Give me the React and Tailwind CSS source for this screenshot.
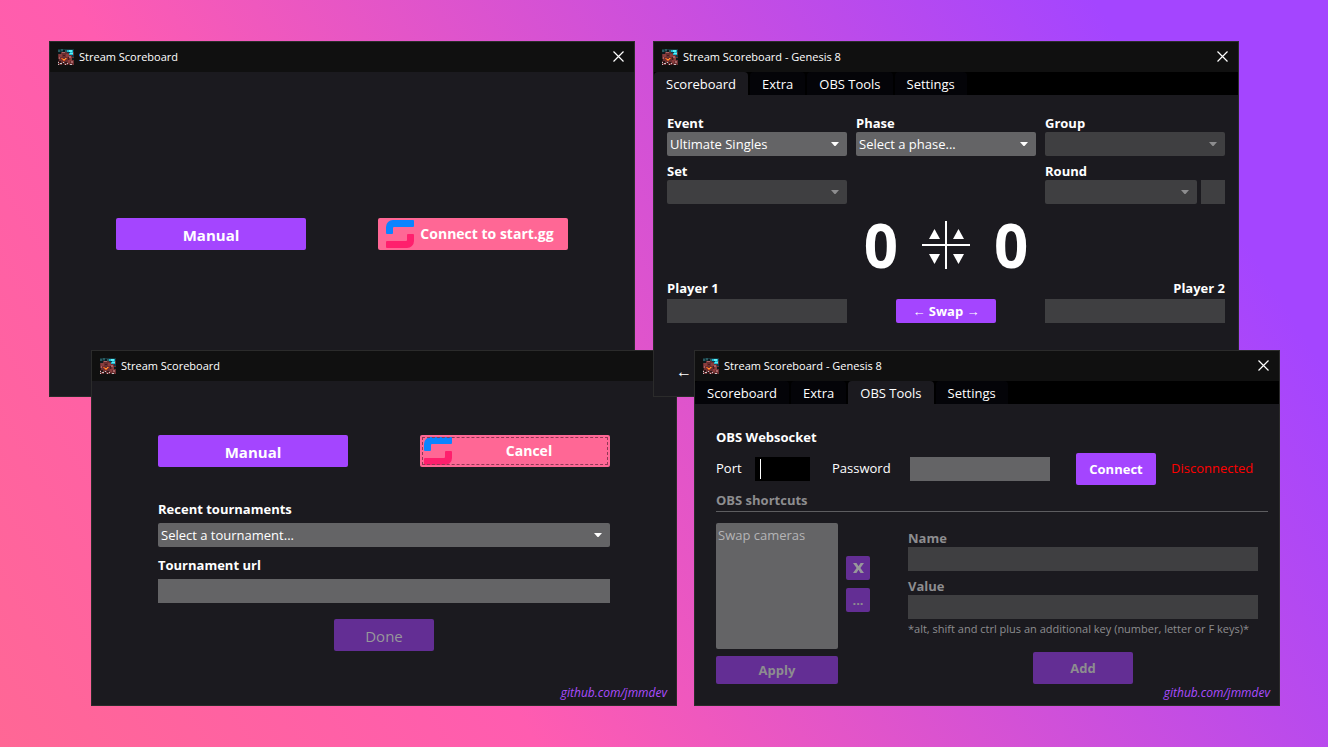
import React, { useId } from "react";

const BODY = "font-['Open_Sans','Noto_Sans',sans-serif]";

function AppIcon() {
  return (
    <svg className="size-4 shrink-0" viewBox="0 0 16 16" shapeRendering="crispEdges" aria-hidden="true">
      <rect width="16" height="16" fill="#6b2f31" />
      <path fill="#16353b" d="M0 0h16v3H0z" />
      <path fill="#2a5b60" d="M0 1h2v2H0zM3 0h2v2H3zM7 1h2v2H7z" />
      <path fill="#0b1a1e" d="M5 1h2v3H5zM0 3h3v2H0zM14 9h2v2h-2z" />
      <path fill="#20b4cf" d="M9 1h6v2H9zM11 3h4v3h-4z" />
      <path fill="#5ff0f7" d="M11 1h3v2h-3zM12 4h3v1h-3z" />
      <path fill="#0e3c4a" d="M9 3h3v1H9zM14 6h2v2h-2z" />
      <path fill="#8a3d3d" d="M1 5h3v3H1zM8 5h3v3H8zM12 8h2v4h-2zM10 11h2v3h-2z" />
      <path fill="#a86466" d="M4 3h3v1H4zM11 7h2v2h-2zM13 12h2v2h-2zM1 8h1v2H1z" />
      <path fill="#4a1a1c" d="M5 6h2v1H5zM10 8h1v3h-1z" />
      <path fill="#d9561d" d="M3 9h2v1H3zM8 9h1v1H8zM4 10h4v1H4zM5 11h2v1H5z" />
      <path fill="#ff9a35" d="M5 10h2v1H5zM7 9h1v1H7z" />
      <path fill="#241416" d="M0 10h1v2H0zM1 12h2v2H1zM4 14h2v2H4zM7 13h2v1H7zM10 15h1v1h-1z" />
      <path fill="#c9c4c6" d="M0 13h1v1H0zM2 14h2v1H2zM5 13h1v1H5zM7 15h1v1H7zM9 14h1v1H9zM12 15h2v1h-2zM0 15h1v1H0z" />
    </svg>
  );
}

function StartLogo() {
  return (
    <svg className="size-7 shrink-0" viewBox="0 0 28 28" aria-hidden="true">
      <path fill="#0b84ff" d="M0 13V7a7 7 0 0 1 7-7h20a1 1 0 0 1 1 1v5a1 1 0 0 1-1 1H8a1 1 0 0 0-1 1v5a1 1 0 0 1-1 1H1a1 1 0 0 1-1-1z" />
      <path fill="#ff1f6d" d="M28 15v6a7 7 0 0 1-7 7H1a1 1 0 0 1-1-1v-5a1 1 0 0 1 1-1h19a1 1 0 0 0 1-1v-5a1 1 0 0 1 1-1h5a1 1 0 0 1 1 1z" />
    </svg>
  );
}

function Window({ title, place, tabs, active, link, children }) {
  return (
    <section className={`absolute flex min-h-[356px] w-[586px] flex-col border border-[#2b2b2b] bg-[#1b1a1f] ${place}`}>
      <header className="flex h-[30px] items-center gap-[5px] bg-[#101010] pr-[10px] pl-2">
        <AppIcon />
        <h2 className="flex-1 text-[11px] leading-4">{title}</h2>
        <button type="button" aria-label="Close" className="pb-[2px]">
          <svg className="size-[11px]" viewBox="0 0 11 11" aria-hidden="true">
            <path d="M.5.5l10 10M10.500.5l-10 10" stroke="#fff" strokeWidth="1.2" />
          </svg>
        </button>
      </header>
      {tabs && (
        <nav className="flex h-[23px] gap-[2px] bg-black">
          {["Scoreboard", "Extra", "OBS Tools", "Settings"].map((t) => (
            <button
              key={t}
              type="button"
              className={`rounded-t px-3 pt-[2px] ${t === active ? "bg-[#1b1a1f]" : "bg-[#040408]"}`}
            >
              {t}
            </button>
          ))}
        </nav>
      )}
      {children}
      {link && (
        <footer className="mt-auto flex justify-end pr-[9px] pb-1">
          <a href="https://github.com/jmmdev" className="text-[12px] leading-4 text-[#ac4dff] italic">
            github.com/jmmdev
          </a>
        </footer>
      )}
    </section>
  );
}

function Select({ id, label, value = "", disabled, className = "" }) {
  return (
    <div className={`relative ${className}`}>
      <select
        id={id}
        aria-label={label}
        disabled={disabled}
        className={`block h-6 w-full appearance-none rounded-[2px] pt-[2px] pr-6 pl-[3px] ${disabled ? "bg-[#3f3f41]" : "bg-[#646466]"}`}
      >
        <option>{value}</option>
      </select>
      <svg className="pointer-events-none absolute top-[10px] right-2 h-1 w-2" viewBox="0 0 8 4" aria-hidden="true">
        <path d="M0 0h8L4.500 4h-1z" fill={disabled ? "#8d8d8f" : "#fff"} />
      </svg>
    </div>
  );
}

function Field({ label, children }) {
  const id = useId();
  return (
    <div>
      <label htmlFor={id} className="block leading-[18px] font-bold">{label}</label>
      {children(id)}
    </div>
  );
}

function Button({ className = "", children, ...rest }) {
  return (
    <button type="button" className={`rounded-[2px] ${className}`} {...rest}>
      {children}
    </button>
  );
}

function Arrow({ down, label }) {
  return (
    <button type="button" aria-label={label} className={`flex justify-center ${down ? "items-start pt-[9px]" : "items-end pb-[6px]"}`}>
      <svg className="h-[10px] w-[11px]" viewBox="0 0 11 10" aria-hidden="true">
        <path d={down ? "M0 0h11L5.500 10z" : "M0 10h11L5.500 0z"} fill="#fff" />
      </svg>
    </button>
  );
}

function StartWindow() {
  return (
    <Window title="Stream Scoreboard" place="top-[41px] left-[49px]">
      <div className="flex justify-between px-[66px] pt-[146px] text-[15px] font-bold">
        <Button className="h-8 w-[190px] bg-[#a445ff] pt-[2px]">Manual</Button>
        <Button className="flex h-8 w-[190px] items-center bg-[#ff6795] px-2 text-[14px]">
          <StartLogo />
          <span className="flex-1 pb-[2px] whitespace-nowrap">Connect to start.gg</span>
        </Button>
      </div>
    </Window>
  );
}

function ConnectWindow() {
  return (
    <Window title="Stream Scoreboard" place="top-[350px] left-[91px]" link>
      <div className="flex flex-col px-[66px] pt-[54px]">
        <div className="flex justify-between text-[15px] font-bold">
          <Button className="h-8 w-[190px] bg-[#a445ff] pt-[2px]">Manual</Button>
          <Button className="flex h-8 w-[190px] items-center bg-[#ff6795] px-1 text-[14px] outline-1 -outline-offset-[3px] outline-[#8f3a55] outline-dashed">
            <StartLogo />
            <span className="flex-1 pb-[2px]">Cancel</span>
          </Button>
        </div>
        <label htmlFor="recent" className="mt-8 mb-1 leading-5 font-bold">Recent tournaments</label>
        <Select id="recent" value="Select a tournament..." />
        <label htmlFor="url" className="mt-2 mb-1 leading-5 font-bold">Tournament url</label>
        <input id="url" type="text" className="h-6 bg-[#646466] px-1" />
        <Button disabled className="mt-4 h-8 w-[100px] self-center bg-[#632e94] pt-[2px] text-[15px] text-[#97979b]">Done</Button>
      </div>
    </Window>
  );
}

function ScoreboardWindow() {
  return (
    <Window title="Stream Scoreboard - Genesis 8" place="top-[41px] left-[653px]" tabs active="Scoreboard">
      <div className="px-[13px] pt-[19px]">
        <div className="grid grid-cols-3 gap-x-[9px] gap-y-[6px]">
          <Field label="Event">{(id) => <Select id={id} value="Ultimate Singles" />}</Field>
          <Field label="Phase">{(id) => <Select id={id} value="Select a phase..." />}</Field>
          <Field label="Group">{(id) => <Select id={id} disabled />}</Field>
          <Field label="Set">{(id) => <Select id={id} disabled />}</Field>
          <div />
          <Field label="Round">
            {(id) => (
              <div className="flex gap-1">
                <Select id={id} disabled className="flex-1" />
                <input aria-label="Round number" disabled className="h-6 w-6 bg-[#3f3f41]" />
              </div>
            )}
          </Field>
        </div>
        <div className="mt-4 mb-[9px] flex h-[50px] items-center justify-center gap-6">
          <output className="text-[60px] leading-[50px] font-bold">0</output>
          <div className="relative grid size-12 grid-cols-2 grid-rows-2">
            <svg className="pointer-events-none absolute inset-0 size-12" viewBox="0 0 48 48" aria-hidden="true">
              <path d="M24 0v48M0 24h48" stroke="#fff" strokeWidth="2" />
            </svg>
            <Arrow label="Player 1 up" />
            <Arrow label="Player 2 up" />
            <Arrow label="Player 1 down" down />
            <Arrow label="Player 2 down" down />
          </div>
          <output className="text-[60px] leading-[50px] font-bold">0</output>
        </div>
        <div className="grid grid-cols-3 items-end gap-x-[9px]">
          <div className="flex flex-col gap-[2px]">
            <label htmlFor="p1" className="leading-[18px] font-bold">Player 1</label>
            <input id="p1" type="text" className="h-6 w-full bg-[#3f3f41] px-1" />
          </div>
          <Button className="h-6 w-[100px] justify-self-center bg-[#a445ff] pt-[2px] font-bold">← Swap →</Button>
          <div className="flex flex-col gap-[2px]">
            <label htmlFor="p2" className="text-right leading-[18px] font-bold">Player 2</label>
            <input id="p2" type="text" className="h-6 w-full bg-[#3f3f41] px-1" />
          </div>
        </div>
        <div className="mt-9 pl-[9px] text-[16px] leading-6">←</div>
      </div>
    </Window>
  );
}

function ObsWindow() {
  return (
    <Window title="Stream Scoreboard - Genesis 8" place="top-[350px] left-[694px]" tabs active="OBS Tools" link>
      <div className="pt-[23px] pr-[11px] pl-[21px]">
        <h3 className="leading-5 font-bold">OBS Websocket</h3>
        <div className="mt-[6px] flex h-8 items-center">
          <label htmlFor="port" className="w-[39px]">Port</label>
          <div className="relative mr-[22px]">
            <input id="port" type="text" className="block h-6 w-[55px] bg-black px-1" />
            <span className="pointer-events-none absolute top-[2px] left-[5px] h-5 w-px bg-white" />
          </div>
          <label htmlFor="password" className="w-[78px]">Password</label>
          <input id="password" type="password" className="mr-[26px] h-6 w-[140px] bg-[#646466] px-1" />
          <Button className="mr-[15px] h-8 w-20 bg-[#a445ff] pt-[2px] font-bold">Connect</Button>
          <span className="text-[#ff0000]">Disconnected</span>
        </div>
        <h3 className="mt-[5px] border-b border-[#5d5d60] pb-px leading-5 font-bold text-[#8d8d8f]">OBS shortcuts</h3>
        <div className="mt-[11px] flex text-[#8d8d8f]">
          <div className="flex w-[122px] flex-col gap-[7px]">
            <ul className="h-[126px] rounded-[2px] bg-[#646466] px-[2px] pt-[3px] text-[#b4b4b6]">
              <li className="leading-[18px]">Swap cameras</li>
            </ul>
            <Button disabled className="h-7 bg-[#632e94] pt-[2px] font-bold">Apply</Button>
          </div>
          <div className="mt-[33px] ml-2 flex flex-col gap-2">
            <Button disabled aria-label="Remove shortcut" className="flex size-6 items-center justify-center bg-[#632e94]">
              <svg className="h-[10px] w-[11px]" viewBox="0 0 11 10" aria-hidden="true">
                <path d="M0 0h3.500l2 3.200L7.600 0H11L7.400 4.900 11 10H7.500l-2-3.300L3.400 10H0l3.600-5.100z" fill="#97979b" />
              </svg>
            </Button>
            <Button disabled className="size-6 bg-[#632e94] pt-[2px] font-bold">...</Button>
          </div>
          <div className="mr-[10px] ml-[38px] flex flex-1 flex-col pt-[6px]">
            <label htmlFor="name" className="leading-[18px] font-bold">Name</label>
            <input id="name" type="text" disabled className="h-6 bg-[#3f3f41] px-1" />
            <label htmlFor="value" className="mt-[6px] leading-[18px] font-bold">Value</label>
            <input id="value" type="text" disabled className="h-6 bg-[#3f3f41] px-1" />
            <p className="text-[11px] leading-5 whitespace-nowrap">*alt, shift and ctrl plus an additional key (number, letter or F keys)*</p>
            <Button disabled className="mt-[13px] h-8 w-[100px] self-center bg-[#632e94] pt-[2px] font-bold">Add</Button>
          </div>
        </div>
      </div>
    </Window>
  );
}

export default function App() {
  return (
    <main className={`relative min-h-screen w-full overflow-hidden bg-[linear-gradient(58deg,#ff6795_0%,#ff5cb0_30%,#a445ff_87%)] text-[13px] text-white ${BODY}`}>
      <StartWindow />
      <ConnectWindow />
      <ScoreboardWindow />
      <ObsWindow />
    </main>
  );
}
